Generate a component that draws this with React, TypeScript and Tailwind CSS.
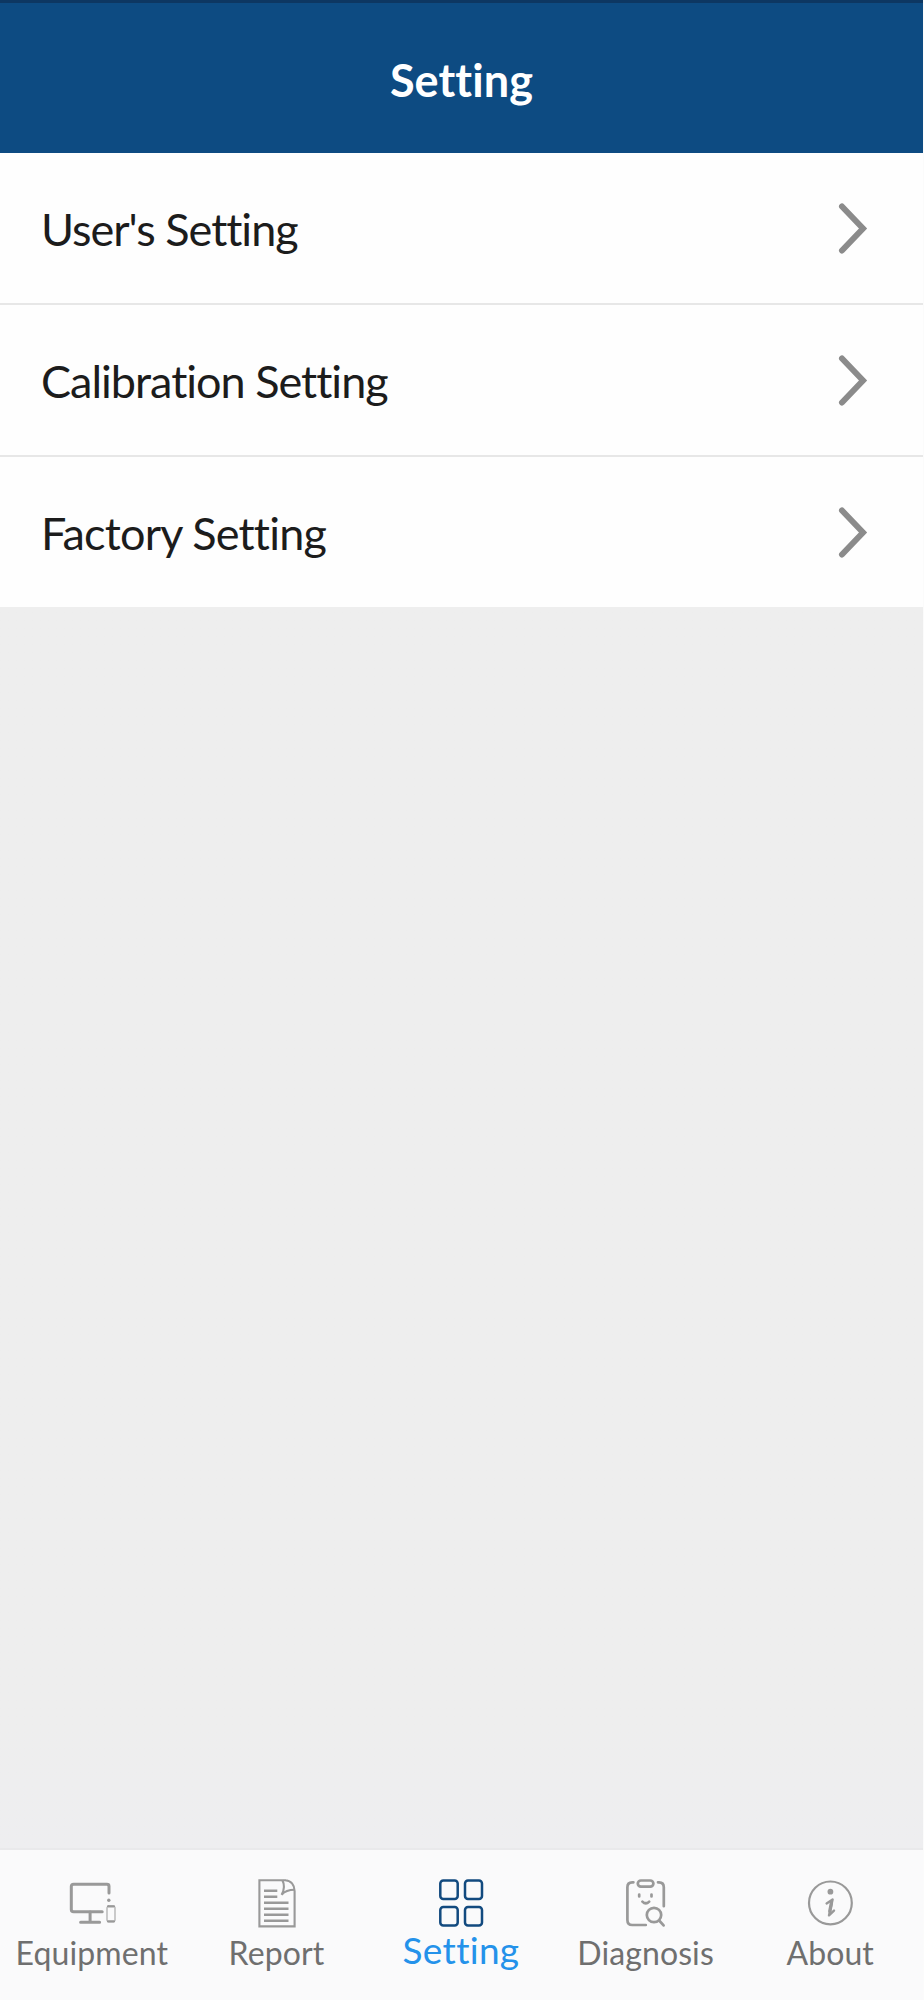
import clsx from "clsx";

const ROWS = [
  { label: "User's Setting", style: "tracking-[-1.02px]" },
  { label: "Calibration Setting", style: "tracking-[-1px]" },
  { label: "Factory Setting", style: "tracking-[-0.8px]" },
];

const EquipmentIcon = () => (
  <svg className="h-12 w-12" viewBox="0 0 48 48" fill="none" stroke="#999999" strokeWidth="3" strokeLinecap="round">
    <path d="M41 14V7.2Q41 5.3 39 5.3H5.6Q3.3 5.3 3.3 7.6V30.4Q3.3 32.7 5.6 32.7H34.2" />
    <path d="M22.1 33V43M12.6 43.2H31.6" />
    <circle cx="40.8" cy="21.2" r="1.7" fill="#999999" stroke="none" />
    <rect x="39" y="27" width="8" height="15.8" rx="1.5" strokeWidth="1" />
    <path d="M40 27.4H46M40 42.4H46" strokeWidth="2.2" />
  </svg>
);

const ReportIcon = () => (
  <svg className="h-12 w-12 overflow-visible" viewBox="0 0 48 48" fill="none" stroke="#999999" strokeWidth="2.1">
    <path d="M33 1.2H6.4V47.4H41.6V12C41.6 6 38 1.2 32 1.2" />
    <path d="M29.4 1.2C31.4 5 31.2 11 28.6 15.8C31.5 12.5 36.5 10.8 41.6 10.8" />
    <path d="M11 11.7H24.3M11 17.7H24.3M11 23.7H35.5M11 29.7H35.5M11 35.7H35.5M11 41.7H35.5" strokeWidth="2.4" />
  </svg>
);

const SettingIcon = () => (
  <svg className="h-12 w-12" viewBox="0 0 48 48" fill="none" stroke="#124a7f" strokeWidth="2.5">
    <rect x="3.3" y="1.5" width="17.4" height="18.6" rx="3" />
    <rect x="28" y="1.5" width="17" height="18.6" rx="3" />
    <rect x="3.3" y="28" width="17.4" height="18.4" rx="3" />
    <rect x="28" y="28" width="17" height="18.4" rx="3" />
  </svg>
);

const DiagnosisIcon = () => (
  <svg className="h-12 w-12 overflow-visible" viewBox="0 0 48 48" fill="none" stroke="#999999" strokeWidth="2.7" strokeLinecap="round">
    <path d="M11.4 3.3H10.2Q5.4 3.3 5.4 8.3V41Q5.4 46 10.2 46H23.8" />
    <path d="M36 3.3H37Q41.8 3.3 41.8 8.3V27.2" />
    <rect x="15.8" y="1.5" width="15.6" height="6.2" rx="3.1" />
    <path d="M17.2 15.6V17.4M29.5 15.6V17.4" />
    <path d="M20.4 22.6Q23.8 26 27.2 22.6" />
    <circle cx="32" cy="36" r="7.2" />
    <path d="M37.6 42L41.6 46.4" />
  </svg>
);

const AboutIcon = () => (
  <svg className="h-12 w-12" viewBox="0 0 48 48" fill="none" stroke="#999999" strokeWidth="2.2" strokeLinecap="round" strokeLinejoin="round">
    <circle cx="23.4" cy="23.9" r="21.4" />
    <circle cx="23.4" cy="12.7" r="2.9" fill="#999999" stroke="none" />
    <path d="M19.6 24.4L25.6 20.4L22 36.4L27 31.6" strokeWidth="2.4" />
    <path d="M24.4 24L22.8 32.4" strokeWidth="3.4" />
  </svg>
);

const TABS = [
  { label: "Equipment", icon: EquipmentIcon },
  { label: "Report", icon: ReportIcon },
  { label: "Setting", icon: SettingIcon, active: true },
  { label: "Diagnosis", icon: DiagnosisIcon },
  { label: "About", icon: AboutIcon },
];

const App = () => {
  return (
    <div className="flex h-[2000px] w-[924px] flex-col overflow-hidden border-r border-[#fbfbfb] bg-[#eeeeee] font-['Lato',sans-serif]">
      <header className="flex h-[153px] items-center justify-center border-t-[3px] border-[#0d3762] bg-[#0d4b82] pt-[5px]">
        <h1 className="text-[45px] leading-none font-bold tracking-[0.1px] text-white">Setting</h1>
      </header>

      <ul className="bg-[#fefefe]">
        {ROWS.map((row) => (
          <li
            key={row.label}
            className="flex h-[152px] items-center justify-between border-b-2 border-[#e7e7e7] pr-[55px] pl-[41px] last:h-[150px] last:border-b-0"
          >
            <span className={clsx("pt-[2px] text-[45px] leading-none text-[#1c1c1c]", row.style)}>{row.label}</span>
            <svg className="h-[52px] w-[30px]" viewBox="0 0 30 52" fill="none" stroke="#8b8b8b" strokeWidth="6" strokeLinecap="round">
              <path d="M4 4.5L25 26.5L4 48.5" />
            </svg>
          </li>
        ))}
      </ul>

      <main className="flex-1 bg-linear-to-b from-[#eeeeee] from-90% to-[#eeeef0]" />

      <nav className="grid h-[152px] grid-cols-5 border-t-2 border-[#e9e9eb] bg-[#fafafb] pt-[29px]">
        {TABS.map((tab) => (
          <div key={tab.label} className="flex flex-col items-center">
            <tab.icon />
            <span
              className={clsx(
                "-ml-px whitespace-nowrap",
                tab.active
                  ? "text-[37px] leading-[46px] tracking-[0.3px] text-[#2492ea]"
                  : "pt-[4px] text-[32px] leading-[44px] tracking-[0.1px] text-[#6f6f6f]"
              )}
            >
              {tab.label}
            </span>
          </div>
        ))}
      </nav>
    </div>
  );
};

export default App;
